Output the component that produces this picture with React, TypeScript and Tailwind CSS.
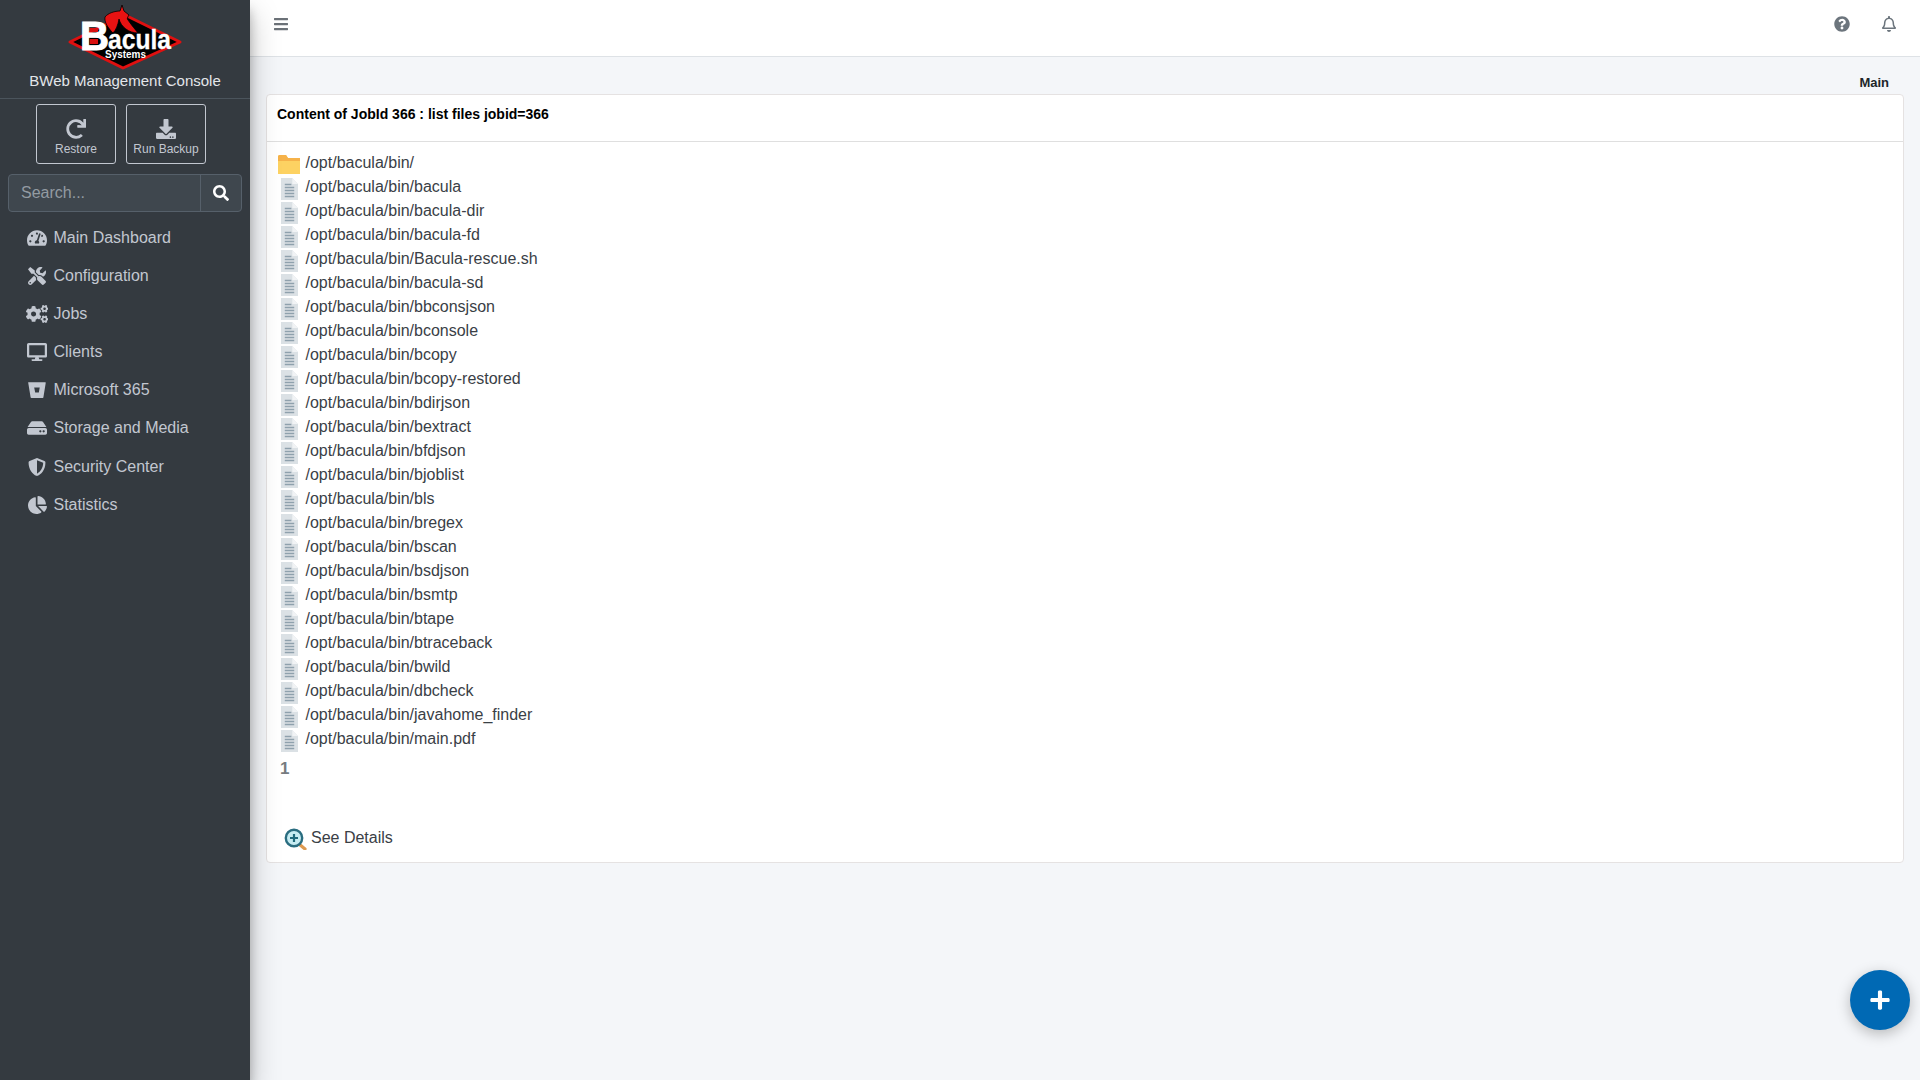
import React from "react";
import {
  FaTachometerAlt, FaTools, FaCogs, FaDesktop, FaBitbucket, FaHdd, FaShieldAlt, FaChartPie,
  FaRedo, FaDownload, FaSearch, FaBars, FaQuestionCircle, FaRegBell, FaPlus,
} from "react-icons/fa";

const nav: [React.ComponentType<{ className?: string }>, string, string, string][] = [
  [FaTachometerAlt, "Main Dashboard", "h-[38px]", "h-[18px] w-[20px]"],
  [FaTools, "Configuration", "h-[38px]", "h-[18px] w-[18px]"],
  [FaCogs, "Jobs", "h-[38px]", "h-[18px] w-[22.5px]"],
  [FaDesktop, "Clients", "h-[38px]", "h-[18px] w-[20px]"],
  [FaBitbucket, "Microsoft 365", "h-[38px]", "h-[18px] w-[18px]"],
  [FaHdd, "Storage and Media", "h-[38px]", "h-[18px] w-[20px]"],
  [FaShieldAlt, "Security Center", "h-[39px]", "h-[18px] w-[18px]"],
  [FaChartPie, "Statistics", "h-[38px]", "h-[18px] w-[19px]"],
];

const files = [
  "bacula", "bacula-dir", "bacula-fd", "Bacula-rescue.sh", "bacula-sd", "bbconsjson", "bconsole", "bcopy",
  "bcopy-restored", "bdirjson", "bextract", "bfdjson", "bjoblist", "bls", "bregex", "bscan", "bsdjson",
  "bsmtp", "btape", "btraceback", "bwild", "dbcheck", "javahome_finder", "main.pdf",
];

function Logo() {
  return (
    <svg width="116" height="72" viewBox="0 0 116 72" className="block">
      <polygon points="58,15 113,42 56,68 3,42" fill="#000" stroke="#e01010" strokeWidth="3" strokeLinejoin="round" />
      <path d="M55 5 L57 11 L62 15 C60 18 60 19 61 20 C65 26 68 29 71 33 C62 33 54 27 52 19 C51 25 49 30 46 33 C41 28 37 22 38 17 C41 13 48 11 53 11 Z" fill="#e81212" stroke="#000" strokeWidth="0.8" />
      <text fontFamily="'Liberation Sans', sans-serif" fontWeight="700" fill="#fff" stroke="#fff">
        <tspan x="13" y="50" fontSize="40" strokeWidth="1" textLength="29" lengthAdjust="spacingAndGlyphs">B</tspan>
        <tspan x="41" y="49" fontSize="27" strokeWidth="0.3" textLength="63" lengthAdjust="spacingAndGlyphs">acula</tspan>
        <tspan x="38" y="58" fontSize="10" strokeWidth="0" textLength="41" lengthAdjust="spacingAndGlyphs">Systems</tspan>
      </text>
      <rect x="23" y="28" width="8" height="4" fill="#d81010" />
      <rect x="23" y="39" width="8" height="5" fill="#d81010" />
    </svg>
  );
}

function FolderIcon() {
  return (
    <svg width="22" height="19" viewBox="0 0 22 19" className="mt-[3px] block">
      <path d="M0 1.5 Q0 0 1.5 0 H8 L10 3 H22 V19 H0 Z" fill="#fdd262" />
      <path d="M0 1.5 Q0 0 1.5 0 H8 L10 3 H22 V6 H0 Z" fill="#f6b24a" />
    </svg>
  );
}

function FileIcon() {
  return (
    <svg width="17" height="22" viewBox="0 0 18 22" preserveAspectRatio="none" className="mt-[4px] block">
      <path d="M0 0 H12 L18 6 V22 H0 Z" fill="#dbe1e5" />
      <path d="M12 0 L18 6 H12 Z" fill="#f1f3f5" />
      <path d="M4 6.5 H11 M4 9.5 H14 M4 12.5 H14 M4 15.5 H14 M4 18.5 H14" stroke="#8fa1ad" strokeWidth="1.3" />
    </svg>
  );
}

function Row({ name, folder }: { name: string; folder?: boolean }) {
  return (
    <div className="flex h-6 items-center">
      <div className="flex w-[26px] justify-center">{folder ? <FolderIcon /> : <FileIcon />}</div>
      <span className="ml-[3.5px] text-[16px] text-[#3a4046]">{name}</span>
    </div>
  );
}

export default function App() {
  return (
    <div className="flex h-screen overflow-hidden bg-[#f4f6f9] font-['Liberation_Sans',sans-serif]">
      <aside className="z-10 flex w-[250px] shrink-0 flex-col bg-[#343a40] shadow-[0_14px_28px_rgba(0,0,0,0.25),0_10px_10px_rgba(0,0,0,0.22)]">
        <div className="flex h-[71px] justify-center"><Logo /></div>
        <div className="h-[28px] border-b border-[#4b545c] text-center text-[15px] leading-[20px] text-[#e3e6ea]">BWeb Management Console</div>
        <div className="mr-[8px] flex justify-center gap-[10px] pt-[5px]">
          <div className="flex h-[60px] w-[80px] flex-col items-center rounded-[3px] border border-[#c2c7d0] pt-[14px] text-[12px] leading-[16px] text-[#c2c7d0]">
            <FaRedo className="h-[20px] w-[20px] text-[#c2c7d0]" />
            <span className="mt-[2px]">Restore</span>
          </div>
          <div className="flex h-[60px] w-[80px] flex-col items-center rounded-[3px] border border-[#c2c7d0] pt-[14px] text-[12px] leading-[16px] text-[#c2c7d0]">
            <FaDownload className="h-[20px] w-[20px] text-[#c2c7d0]" />
            <span className="mt-[2px]">Run Backup</span>
          </div>
        </div>
        <div className="mx-[8px] mt-[10px] flex h-[38px] w-[234px] rounded-[4px] border border-[#56606a] bg-[#3f474e]">
          <div className="flex-1 px-[12px] text-[16px] leading-[36px] text-[#939ba2]">Search...</div>
          <div className="flex w-[41px] items-center justify-center border-l border-[#56606a]"><FaSearch className="h-[16px] w-[16px] text-white" /></div>
        </div>
        <nav className="mt-[7px]">
          {nav.map(([Icon, label, h, size]) => (
            <div key={label} className={`flex items-center ${h}`}>
              <div className="ml-[26px] flex w-[22px] justify-center"><Icon className={`${size} shrink-0 text-[#c2c7d0]`} /></div>
              <span className="ml-[5.5px] text-[16px] text-[#c2c7d0]">{label}</span>
            </div>
          ))}
        </nav>
      </aside>
      <main className="flex min-w-0 flex-1 flex-col">
        <header className="flex h-[57px] shrink-0 items-start justify-between border-b border-[#dee2e6] bg-white px-[24px] pt-[16px]">
          <FaBars className="h-[16px] w-[14px] text-[#6b7177]" />
          <div className="flex items-center gap-[32px]">
            <FaQuestionCircle className="h-[16px] w-[16px] text-[#6c757d]" />
            <FaRegBell className="h-[16px] w-[14px] text-[#6c757d]" />
          </div>
        </header>
        <div className="px-[16px]">
          <div className="h-[37px] pt-[18px] pr-[15px] text-right text-[13px] font-bold leading-[16px] text-[#212529]">Main</div>
          <section className="flex h-[769px] flex-col rounded-[4px] border border-[#e5e2e2] bg-white">
            <div className="h-[47px] border-b border-[#dfdfdf] px-[10px] pt-[9px] text-[14px] font-bold leading-[20px] text-black">Content of JobId 366 : list files jobid=366</div>
            <div className="px-[9px] pt-[9px]">
              <Row name="/opt/bacula/bin/" folder />
              {files.map((f) => <Row key={f} name={`/opt/bacula/bin/${f}`} />)}
              <div className="mt-[6px] pl-[4px] text-[17px] font-bold leading-[24px] text-[#767b80]">1</div>
            </div>
            <div className="mt-[45px] flex items-center pl-[16px]">
              <svg width="24" height="24" viewBox="-1 -2 24 24" className="block">
                <path d="M15 16 L21 21" stroke="#dd9a50" strokeWidth="3.2" strokeLinecap="round" />
                <circle cx="10" cy="10" r="8.2" fill="#c6ecf2" stroke="#2a6d80" strokeWidth="2.4" />
                <path d="M10 6 V14 M6 10 H14" stroke="#1f6a7c" strokeWidth="2.2" />
              </svg>
              <span className="ml-[4px] text-[16px] text-[#3a4046]">See Details</span>
            </div>
          </section>
        </div>
      </main>
      <div className="fixed bottom-[50px] right-[10px] flex h-[60px] w-[60px] items-center justify-center rounded-full bg-[#0069b4] shadow-[0_4px_14px_rgba(0,0,0,0.25)]">
        <FaPlus className="h-[22px] w-[22px] text-white" />
      </div>
    </div>
  );
}
